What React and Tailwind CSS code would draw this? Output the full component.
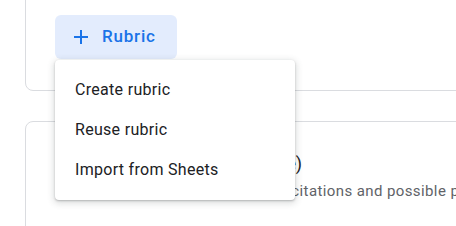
import React from 'react';

const menuItems = ['Create rubric', 'Reuse rubric', 'Import from Sheets'];

function PlusIcon() {
  return (
    <svg width="16" height="16" viewBox="0 0 16 16" fill="none">
      <path d="M8 1v14M1 8h14" stroke="#1a73e8" strokeWidth="2" />
    </svg>
  );
}

export default function App() {
  return (
    <div className="w-[456px] h-[226px] overflow-hidden bg-white font-['Roboto',sans-serif]">
      {/* Rubric card (top cut off) */}
      <div className="ml-[25px] -mr-4 -mt-4 h-[107px] border border-[#dadce0] rounded-lg pt-[30px] pl-[29px]">
        <div className="relative w-[122px]">
          <button className="flex items-center h-[44px] w-[122px] rounded-md bg-[#e3ecfd] pl-[18px] gap-[13px] text-[#1a73e8] text-[17px] font-medium tracking-[0.8px]">
            <PlusIcon />
            <span>Rubric</span>
          </button>

          {/* Dropdown menu */}
          <div className="absolute left-0 top-[45px] z-10 w-[240px] py-[10px] bg-white rounded-[4px] shadow-[0_1px_2px_rgba(60,64,67,0.3),0_2px_6px_2px_rgba(60,64,67,0.15)]">
            {menuItems.map(item => (
              <div key={item} className="h-10 flex items-center px-5 text-[16px] tracking-[0.3px] text-[#202124]">
                {item}
              </div>
            ))}
          </div>
        </div>
      </div>

      {/* Originality card */}
      <div className="mt-[30px] ml-[25px] -mr-4 h-[200px] border border-[#dadce0] rounded-lg pt-[30px] pl-[29px]">
        <div className="text-[18px] text-[#202124] leading-6 tracking-[-0.1px]">Originality reports (Learn more)</div>
        <div className="mt-[5px] pl-[105px] text-[15px] leading-5 text-[#5f6368] tracking-[0.4px] whitespace-nowrap">
          Check for missing citations and possible plagiarism
        </div>
      </div>
    </div>
  );
}
